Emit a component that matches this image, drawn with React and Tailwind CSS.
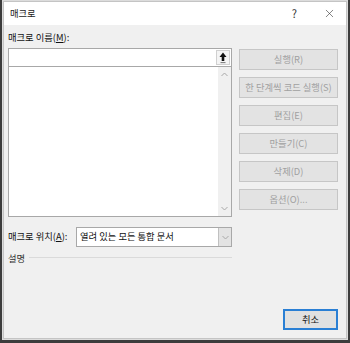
import { X } from "lucide-react";

const font = {
  fontFamily: '"Noto Sans CJK KR", "Noto Sans", sans-serif',
};

function SideButton({ children }) {
  return (
    <button
      type="button"
      disabled
      className="h-[21px] w-full border border-[#c6c6c6] bg-[#e3e3e3] text-[9.3px] leading-none text-[#a0a0a0]"
    >
      {children}
    </button>
  );
}

function Chevron({ up }) {
  return (
    <svg width="7" height="5" viewBox="0 0 7 5" className="text-[#a8a8a8]">
      <path
        d={up ? "M0.5 4 L3.5 1 L6.5 4" : "M0.5 1 L3.5 4 L6.5 1"}
        fill="none"
        stroke="currentColor"
        strokeWidth="1"
      />
    </svg>
  );
}

export default function App() {
  return (
    <div
      className="h-[343px] w-[350px] bg-[#3c3c3c] px-[2px] pb-[3px]"
      style={font}
    >
      <div className="flex h-full flex-col bg-[#dcdcdc] p-[1px]">
        <div className="flex h-full flex-col border border-[#c4c4c4] bg-[#f0f0f0]">
          {/* title bar */}
          <div className="flex h-[23px] items-center bg-white pl-[6px] pr-[10px] text-[9.3px] text-[#222]">
            <span>매크로</span>
            <span className="ml-auto mr-[26px] text-[11px] text-[#333]">?</span>
            <X size={13} strokeWidth={1.1} className="text-[#333]" />
          </div>

          <div className="flex flex-1 px-[4px] pt-[6px]">
            {/* left column */}
            <div className="flex w-[224px] flex-col">
              <div className="text-[9.3px] leading-[12px] text-[#111]">
                매크로 이름(<span className="underline">M</span>):
              </div>
              <div className="mt-[5px] flex h-[19px] border border-[#a8a8a8] bg-white">
                <div className="flex-1" />
                <div className="m-[1px] flex w-[14px] items-center justify-center border border-[#d0d0d0] bg-[#f4f4f4]">
                  <svg width="8" height="12" viewBox="0 0 8 12">
                    <path d="M4 0.5 L7.5 5 L5.3 5 L5.3 9 L2.7 9 L2.7 5 L0.5 5 Z" fill="#111" />
                    <rect x="1.5" y="10.3" width="5" height="0.8" fill="#555" />
                  </svg>
                </div>
              </div>
              <div className="flex h-[150px] border border-t-0 border-[#a8a8a8] bg-white">
                <div className="flex-1" />
                <div className="flex w-[13px] flex-col items-center justify-between bg-[#f0f0f0] py-[5px]">
                  <Chevron up />
                  <Chevron />
                </div>
              </div>

              <div className="mt-[10px] flex items-center">
                <span className="w-[68px] text-[9.3px] text-[#111]">
                  매크로 위치(<span className="underline">A</span>):
                </span>
                <div className="flex h-[20px] flex-1 border border-[#a8a8a8] bg-white">
                  <span className="flex flex-1 items-center pl-[3px] text-[9.3px] text-[#111]">
                    열려 있는 모든 통합 문서
                  </span>
                  <div className="flex w-[13px] items-center justify-center border-l border-[#c0c0c0] bg-[#e3e3e3]">
                    <Chevron />
                  </div>
                </div>
              </div>

              <div className="mt-[5px] flex items-center">
                <span className="text-[9.3px] text-[#333]">설명</span>
                <div className="ml-[4px] mb-[3px] h-px flex-1 bg-[#dadada]" />
              </div>
            </div>

            {/* right column */}
            <div className="ml-[7px] flex flex-1 flex-col pr-[4px] pt-[18px]">
              <div className="flex flex-col gap-[7px]">
                <SideButton>실행(R)</SideButton>
                <SideButton>한 단계씩 코드 실행(S)</SideButton>
                <SideButton>편집(E)</SideButton>
                <SideButton>만들기(C)</SideButton>
                <SideButton>삭제(D)</SideButton>
                <SideButton>옵션(O)...</SideButton>
              </div>
              <div className="mt-auto mb-[8px] flex justify-end">
                <button
                  type="button"
                  className="h-[21px] w-[55px] border-2 border-[#2a7fd4] bg-[#e1e1e1] text-[9.3px] leading-none text-[#111]"
                >
                  취소
                </button>
              </div>
            </div>
          </div>
        </div>
      </div>
    </div>
  );
}
